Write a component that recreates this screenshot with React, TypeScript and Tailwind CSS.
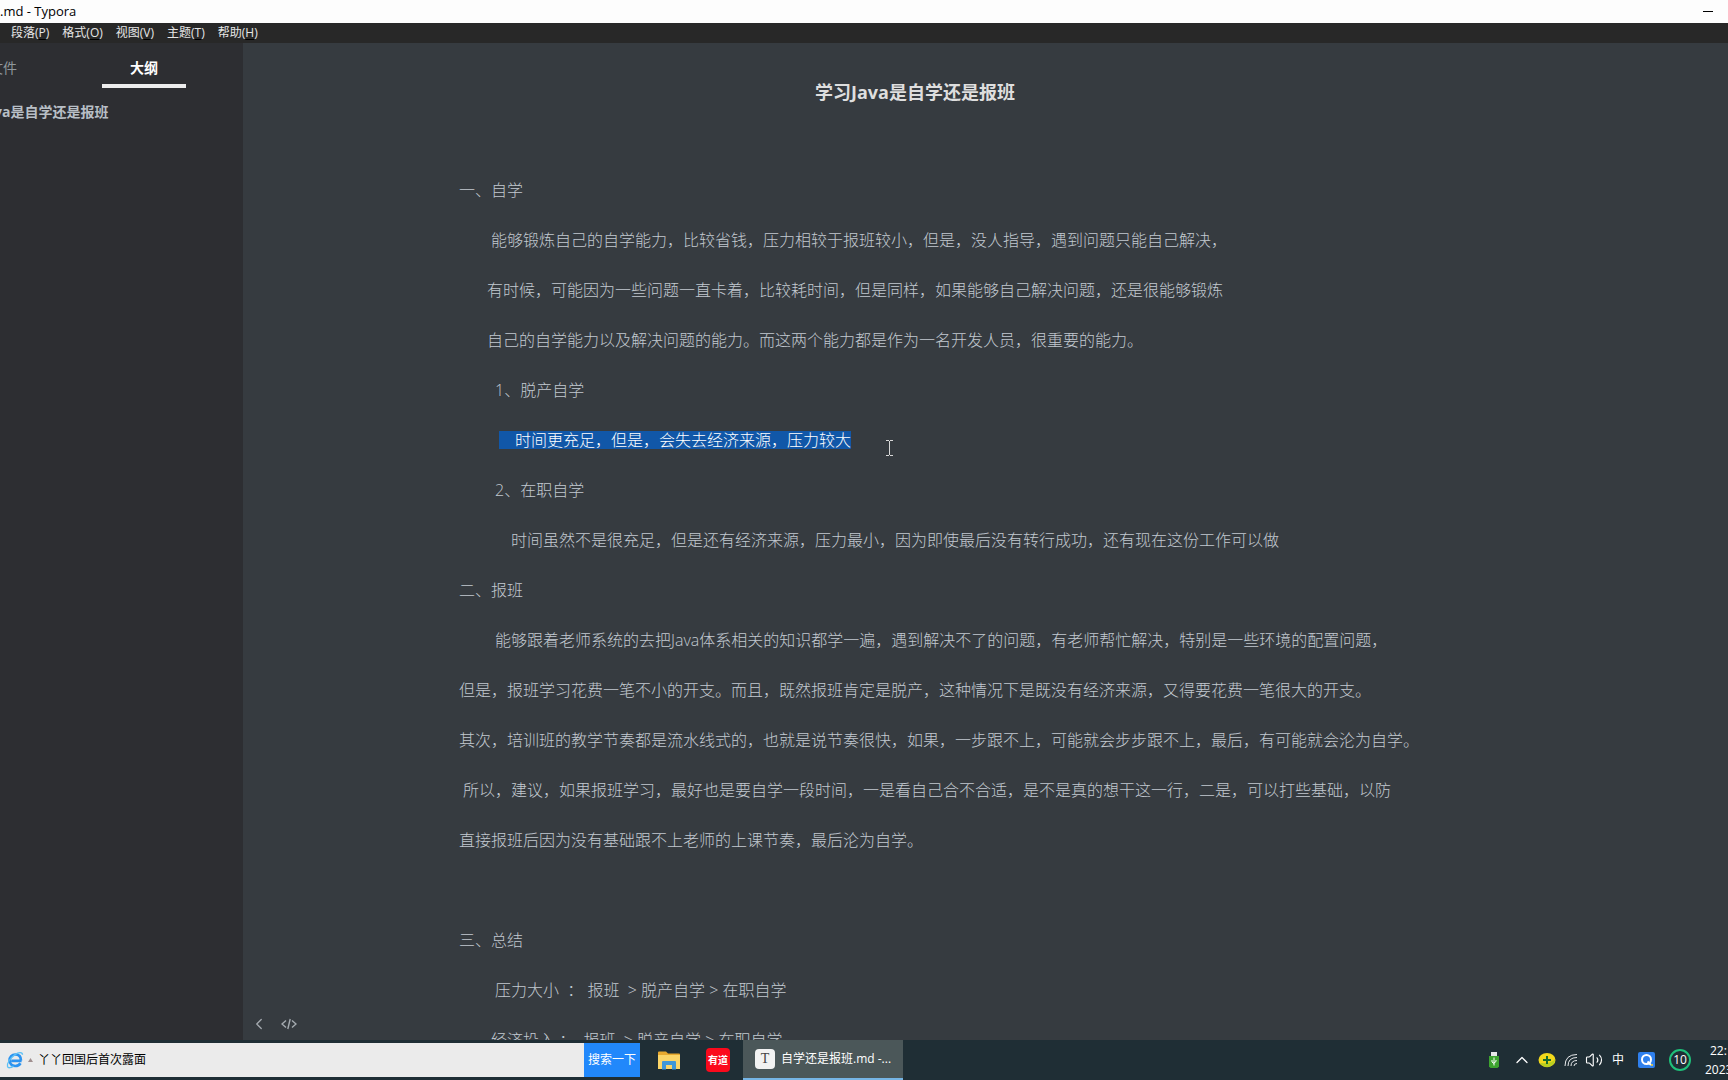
import { ChevronLeft, ChevronUp, Volume2 } from 'lucide-react'

const menus = [
  { label: '段落', hotkey: 'P' },
  { label: '格式', hotkey: 'O' },
  { label: '视图', hotkey: 'V' },
  { label: '主题', hotkey: 'T' },
  { label: '帮助', hotkey: 'H' },
]

const lines = [
  { text: '一、自学', indent: '' },
  { text: '能够锻炼自己的自学能力，比较省钱，压力相较于报班较小，但是，没人指导，遇到问题只能自己解决，', indent: 'pl-8' },
  { text: '有时候，可能因为一些问题一直卡着，比较耗时间，但是同样，如果能够自己解决问题，还是很能够锻炼', indent: 'pl-7' },
  { text: '自己的自学能力以及解决问题的能力。而这两个能力都是作为一名开发人员，很重要的能力。', indent: 'pl-7' },
  { text: '1、脱产自学', indent: 'pl-9' },
  { text: '时间更充足，但是，会失去经济来源，压力较大', indent: 'pl-10', selected: true },
  { text: '2、在职自学', indent: 'pl-9' },
  { text: '时间虽然不是很充足，但是还有经济来源，压力最小，因为即使最后没有转行成功，还有现在这份工作可以做', indent: 'pl-13' },
  { text: '二、报班', indent: '' },
  { text: '能够跟着老师系统的去把Java体系相关的知识都学一遍，遇到解决不了的问题，有老师帮忙解决，特别是一些环境的配置问题，', indent: 'pl-9' },
  { text: '但是，报班学习花费一笔不小的开支。而且，既然报班肯定是脱产，这种情况下是既没有经济来源，又得要花费一笔很大的开支。', indent: '' },
  { text: '其次，培训班的教学节奏都是流水线式的，也就是说节奏很快，如果，一步跟不上，可能就会步步跟不上，最后，有可能就会沦为自学。', indent: '' },
  { text: '所以，建议，如果报班学习，最好也是要自学一段时间，一是看自己合不合适，是不是真的想干这一行，二是，可以打些基础，以防', indent: 'pl-1' },
  { text: '直接报班后因为没有基础跟不上老师的上课节奏，最后沦为自学。', indent: '' },
  { text: '', indent: '' },
  { text: '三、总结', indent: '' },
  { text: '压力大小  ： 报班  > 脱产自学 > 在职自学', indent: 'pl-9' },
  { text: '经济投入 ：  报班  > 脱产自学 > 在职自学', indent: 'pl-8' },
]

function TitleBar() {
  return (
    <header className="flex h-[23px] shrink-0 items-center justify-between bg-[#fdfdfd] pr-[15px] text-[13px] text-black">
      <span>.md - Typora</span>
      <button aria-label="最小化" className="flex h-full items-center justify-center">
        <span className="h-px w-[10px] bg-black" />
      </button>
    </header>
  )
}

function MenuBar() {
  return (
    <nav className="flex h-5 shrink-0 items-center gap-[13px] bg-[#282828] pl-[11px] text-xs text-[#e6e6e6]">
      {menus.map((m) => (
        <button key={m.hotkey} className="whitespace-nowrap">
          {m.label}(<span className="underline decoration-black underline-offset-2">{m.hotkey}</span>)
        </button>
      ))}
    </nav>
  )
}

function Sidebar() {
  return (
    <aside className="w-[243px] shrink-0 overflow-hidden bg-[#2d2e32] text-sm">
      <div className="flex h-[45px]" role="tablist">
        <button role="tab" aria-selected="false" className="-ml-[11px] flex h-full w-[113px] items-center pt-1 text-[#8f979c]">
          文件
        </button>
        <button role="tab" aria-selected="true" className="flex h-full w-[84px] items-center justify-center border-b-4 border-[#ededed] pt-2 font-bold text-white">
          大纲
        </button>
      </div>
      <a href="#top" className="mt-[14px] -ml-[47px] block leading-5 font-bold whitespace-nowrap text-[#b8bfc6]">
        学习Java是自学还是报班
      </a>
    </aside>
  )
}

function Editor() {
  return (
    <main className="relative min-w-0 flex-1 overflow-hidden bg-[#363b40] pr-[141px]">
      <article className="mx-auto flex max-w-[912px] flex-col pt-[31px] text-base font-light text-[#c2c9d0]">
        <h1 id="top" className="mb-[55px] text-center text-lg leading-[36px] font-bold text-[#dedede]">
          学习Java是自学还是报班
        </h1>
        {lines.map((line, i) => (
          <p key={i} className={`h-[50px] shrink-0 leading-[50px] whitespace-pre ${line.indent}`}>
            {line.selected ? <mark className="inline-block bg-[#1157a8] pl-4 leading-[18px] text-white">{line.text}</mark> : line.text}
          </p>
        ))}
      </article>
      <div className="absolute bottom-1 left-1 flex items-center gap-1.5 text-[#a5abb0]">
        <button aria-label="收起侧边栏" className="flex size-6 items-center justify-center">
          <ChevronLeft size={18} strokeWidth={1.75} />
        </button>
        <button aria-label="源代码模式" className="flex size-6 items-center justify-center">
          <svg width="16" height="12" viewBox="0 0 16 12" fill="none" stroke="currentColor" strokeWidth="1.4">
            <path d="M5 2.5 1 6l4 3.5M11 2.5 15 6l-4 3.5M9.2 1 6.8 11" />
          </svg>
        </button>
      </div>
      {/* text cursor */}
      <svg className="absolute top-[396px] left-[642px]" width="9" height="18" viewBox="0 0 9 18" fill="none" stroke="#d8d8d8">
        <path d="M1 1.5h3M5 1.5h3M4.5 2v14M1 16.5h3M5 16.5h3" />
      </svg>
    </main>
  )
}

function EdgeIcon() {
  return (
    <svg width="18" height="18" viewBox="0 0 18 18" fill="none">
      <path d="M15.6 9.8H5.2M15 9.6C15 5.6 12.6 3.5 9.3 3.5 5.900 3.500 3.600 6 3.600 9.300c0 3.500 2.500 5.700 5.700 5.700 2.300 0 4.100-.9 5.200-2.700" stroke="#2b93f0" strokeWidth="2.7" />
      <path d="M16.5 3.8C16.600 1 13 .7 9 3.600 4 7.200.7 12.500 1.500 15.500c.7 2.200 3.600 1.200 6-.4" stroke="#5cc0f5" strokeWidth="1.3" />
    </svg>
  )
}

function FolderIcon() {
  return (
    <svg width="22" height="19" viewBox="0 0 22 19">
      <path d="M0 1.500Q0 .5 1 .5h7l2 2h11q1 0 1 1V17H0z" fill="#e8a92f" />
      <path d="M0 4h22v14H0z" fill="#fbd568" />
      <path d="M4 18.500V11q0-1 1-1h12q1 0 1 1v7.500h-4V14H8v4.500z" fill="#3f97d8" />
    </svg>
  )
}

function Taskbar() {
  return (
    <footer className="flex h-10 shrink-0 items-center overflow-hidden bg-[#1f2e35] text-white">
      <form className="flex h-[34px] w-[640px] shrink-0 bg-[#ebebeb]" onSubmit={(e) => e.preventDefault()}>
        <div className="flex items-center gap-1 pl-[6px]">
          <EdgeIcon />
          <svg width="5" height="4" viewBox="0 0 5 4">
            <path d="M0 4 2.5 0 5 4z" fill="#a08f8f" />
          </svg>
        </div>
        <input aria-label="搜索" defaultValue="丫丫回国后首次露面" className="min-w-0 flex-1 bg-transparent pl-[5px] text-xs text-black outline-none" />
        <button className="w-14 shrink-0 bg-[#2188fb] text-xs text-white">搜索一下</button>
      </form>
      <button aria-label="文件资源管理器" className="ml-[18px] shrink-0">
        <FolderIcon />
      </button>
      <button className="ml-[26px] flex size-6 shrink-0 items-center justify-center rounded bg-[#fb0a1c] text-[10px] font-bold">
        有道
      </button>
      <button className="ml-[13px] flex h-full w-40 shrink-0 items-center gap-1.5 border-b-2 border-[#76b5e5] bg-[#4b5759] pl-3 text-xs">
        <span className="flex h-5 w-5 items-center justify-center rounded-sm bg-[#f2f2f2] font-['Liberation_Serif',serif] text-sm leading-none text-[#444]">T</span>
        自学还是报班.md -...
      </button>
      <div className="ml-auto flex h-full shrink-0 items-center">
        <svg width="10" height="16" viewBox="0 0 10 16">
          <path d="M2 0h6v4H2z" fill="#e8e8e8" />
          <path d="M0 4h10v10.500L8.500 16h-7L0 14.500z" fill="#3da32f" />
          <path d="M5 5.500v8M3 8v2l2 1.500M7 8v1.500L5 11" stroke="#fff" fill="none" />
        </svg>
        <ChevronUp size={20} strokeWidth={1.5} className="ml-[13px]" />
        <svg className="ml-1.5" width="18" height="16" viewBox="0 0 18 16">
          <ellipse cx="9" cy="8" rx="8.5" ry="7" fill="#f3d91c" />
          <path d="M2 11q3 5 9 4 6-2 6-8-3 5-15 4z" fill="#b9cf1f" />
          <path d="M9 4v8M5 8h8" stroke="#176b2c" strokeWidth="2" />
        </svg>
        <svg className="ml-2" width="14" height="14" viewBox="0 0 14 14" fill="none" stroke="#e8eaec">
          <path d="M1 13Q1 1.500 13 1.500M4 13Q4 4.500 13 4.500M7 13Q7 7.500 13 7.500M10 13q0-2.500 3-2.500" />
        </svg>
        <Volume2 size={18} strokeWidth={1.5} className="ml-[7px]" />
        <span className="ml-[9px] w-3 text-xs">中</span>
        <svg className="ml-[14px]" width="17" height="16" viewBox="0 0 17 16">
          <rect width="17" height="16" rx="2" fill="#2f80ed" />
          <circle cx="8.5" cy="7.5" r="4.5" stroke="#fff" strokeWidth="2" fill="none" />
          <path d="M9.500 9.500 13 13" stroke="#fff" strokeWidth="2" />
          <circle cx="14" cy="13" r="1" fill="#ffd52e" />
        </svg>
        <span className="ml-[14px] flex size-[22px] items-center justify-center rounded-full border-2 border-[#1fc07a] text-xs">10</span>
        <div className="ml-[14px] flex w-[23px] flex-col items-start text-xs leading-[19px]">
          <span className="pl-[5px]">22:</span>
          <span>2023</span>
        </div>
      </div>
    </footer>
  )
}

export default function App() {
  return (
    <div lang="zh-CN" className="flex h-screen flex-col overflow-hidden font-['Open_Sans','Noto_Sans_CJK_SC',sans-serif]">
      <TitleBar />
      <MenuBar />
      <div className="flex min-h-0 flex-1">
        <Sidebar />
        <Editor />
      </div>
      <Taskbar />
    </div>
  )
}
